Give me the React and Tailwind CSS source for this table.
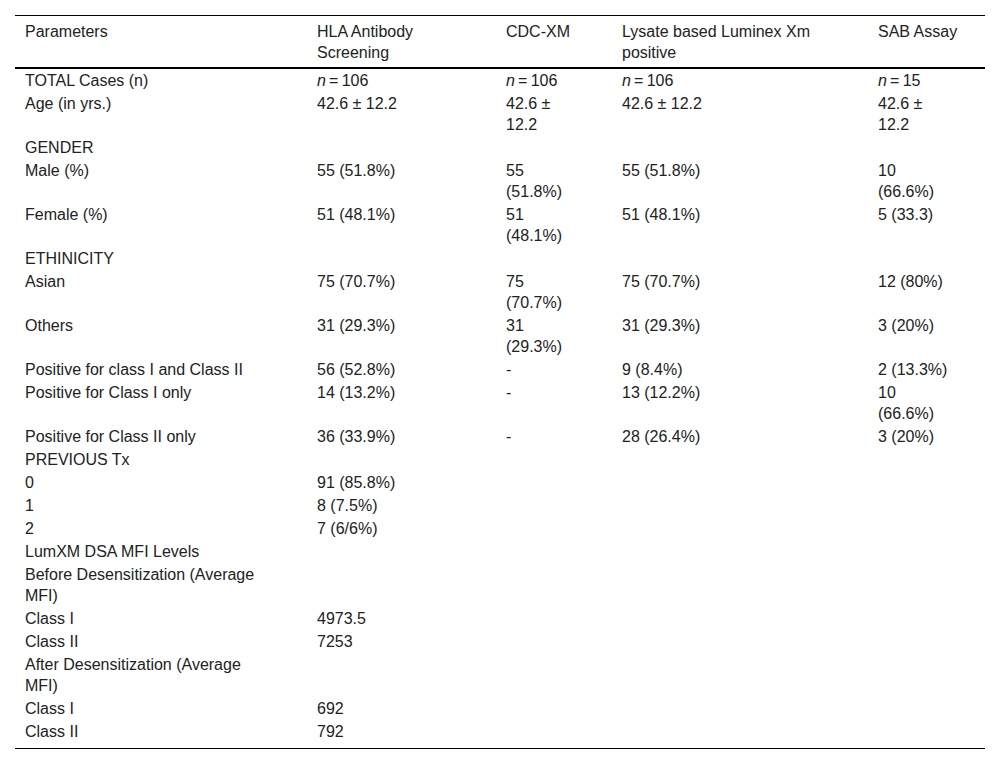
import React from "react";

const N = ({ v }) => (
	<>
		<i>n</i>{"\u2009=\u2009"}{v}
	</>
);

const rows = [
	["TOTAL Cases (n)", <N v="106" />, <N v="106" />, <N v="106" />, <N v="15" />],
	["Age (in yrs.)", "42.6 ± 12.2", "42.6 ± 12.2", "42.6 ± 12.2", "42.6 ± 12.2"],
	["GENDER", "", "", "", ""],
	["Male (%)", "55 (51.8%)", "55 (51.8%)", "55 (51.8%)", "10 (66.6%)"],
	["Female (%)", "51 (48.1%)", "51 (48.1%)", "51 (48.1%)", "5 (33.3)"],
	["ETHINICITY", "", "", "", ""],
	["Asian", "75 (70.7%)", "75 (70.7%)", "75 (70.7%)", "12 (80%)"],
	["Others", "31 (29.3%)", "31 (29.3%)", "31 (29.3%)", "3 (20%)"],
	["Positive for class I and Class II", "56 (52.8%)", "-", "9 (8.4%)", "2 (13.3%)"],
	["Positive for Class I only", "14 (13.2%)", "-", "13 (12.2%)", "10 (66.6%)"],
	["Positive for Class II only", "36 (33.9%)", "-", "28 (26.4%)", "3 (20%)"],
	["PREVIOUS Tx", "", "", "", ""],
	["0", "91 (85.8%)", "", "", ""],
	["1", "8 (7.5%)", "", "", ""],
	["2", "7 (6/6%)", "", "", ""],
	["LumXM DSA MFI Levels", "", "", "", ""],
	["Before Desensitization (Average MFI)", "", "", "", ""],
	["Class I", "4973.5", "", "", ""],
	["Class II", "7253", "", "", ""],
	["After Desensitization (Average MFI)", "", "", "", ""],
	["Class I", "692", "", "", ""],
	["Class II", "792", "", "", ""],
];

const headers = [
	"Parameters",
	"HLA Antibody Screening",
	"CDC-XM",
	"Lysate based Luminex Xm positive",
	"SAB Assay",
];

export default function App() {
	return (
		<div className="w-[1000px] min-h-[765px] bg-white pt-[15px] pl-[15px] font-['Liberation_Sans',Arial,sans-serif] text-[16px] leading-[21px] text-[#222]">
			<table className="w-[970px] table-fixed border-collapse">
				<colgroup>
					<col className="w-[292px]" />
					<col className="w-[189px]" />
					<col className="w-[116px]" />
					<col className="w-[256px]" />
					<col className="w-[117px]" />
				</colgroup>
				<thead>
					<tr className="border-t border-black border-b-2">
						{headers.map((h) => (
							<th
								key={h}
								className="text-left font-normal align-top pl-[10px] pr-[20px] pt-[5px] pb-[4px]"
							>
								{h}
							</th>
						))}
					</tr>
				</thead>
				<tbody>
					{rows.map((r, i) => {
						const last = i === rows.length - 1;
						return (
							<tr key={i} className={last ? "border-b border-black" : ""}>
								{r.map((c, j) => (
									<td
										key={j}
										className={`align-top pl-[10px] pr-[32px] pt-px ${
											last ? "pb-[6px]" : "pb-px"
										}`}
									>
										{c}
									</td>
								))}
							</tr>
						);
					})}
				</tbody>
			</table>
		</div>
	);
}
